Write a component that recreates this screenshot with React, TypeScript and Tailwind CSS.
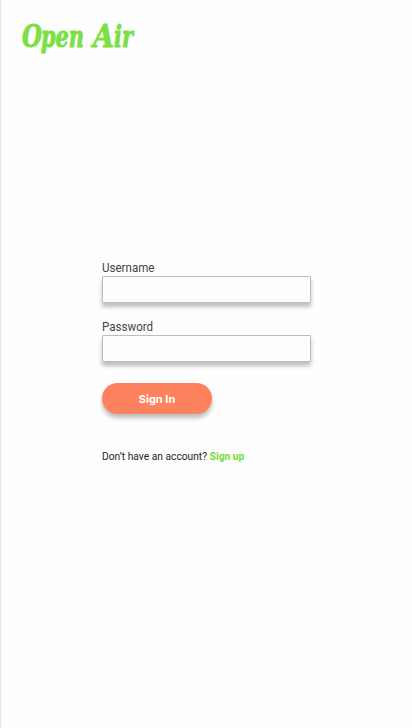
function Field({ label, type }: { label: string; type: string }) {
  return (
    <label className="block w-[209px]">
      <span className="block h-[17px] w-max origin-left scale-x-[0.89] text-[13px] leading-[17px] text-[#444]">{label}</span>
      <input
        type={type}
        className="block h-[27px] w-full rounded-[1px] border border-[#bdbdbd] bg-[#fdfdfd] px-2 text-[13px] shadow-[0_4px_4px_rgba(0,0,0,0.25)] outline-none"
      />
    </label>
  );
}

function Logo() {
  return (
    <svg width="120" height="44" viewBox="0 0 120 44" className="block" role="img" aria-label="Open Air">
      <g
        fill="#7be044"
        stroke="#7be044"
        strokeWidth="0.9"
        strokeLinejoin="round"
        fontFamily="'DejaVu Serif Condensed', 'DejaVu Serif', serif"
        fontStyle="italic"
        fontWeight="700"
        fontSize="31"
      >
        <text x="3" y="30" textLength="20" lengthAdjust="spacingAndGlyphs">O</text>
        <text x="22" y="30" fontSize="29" textLength="43" lengthAdjust="spacingAndGlyphs">pen</text>
        <text x="74" y="30" textLength="21" lengthAdjust="spacingAndGlyphs">A</text>
        <text x="95" y="30" fontSize="29" textLength="19" lengthAdjust="spacingAndGlyphs">ir</text>
      </g>
    </svg>
  );
}

export default function App() {
  return (
    <main className="flex h-[728px] w-full flex-col overflow-hidden border-l border-[#e3e3e3] bg-[#fefefe] font-[Roboto,sans-serif]">
      <header className="pt-[17px] pl-[18px]">
        <Logo />
      </header>
      <form className="mt-[198px] ml-[101px] flex flex-col items-start" onSubmit={(e) => e.preventDefault()}>
        <Field label="Username" type="text" />
        <div className="mt-[15px]">
          <Field label="Password" type="password" />
        </div>
        <button className="mt-[21px] h-[31px] w-[110px] rounded-full bg-[#ff825f] pt-px font-[Inter,sans-serif] text-[11px] font-bold text-white shadow-[0_4px_4px_rgba(0,0,0,0.25)]">
          Sign In
        </button>
        <p className="mt-[35px] w-max origin-left scale-x-[0.93] text-[11px] leading-4 text-[#222]">
          Don’t have an account? <a className="font-extrabold text-[#7be044]">Sign up</a>
        </p>
      </form>
    </main>
  );
}
